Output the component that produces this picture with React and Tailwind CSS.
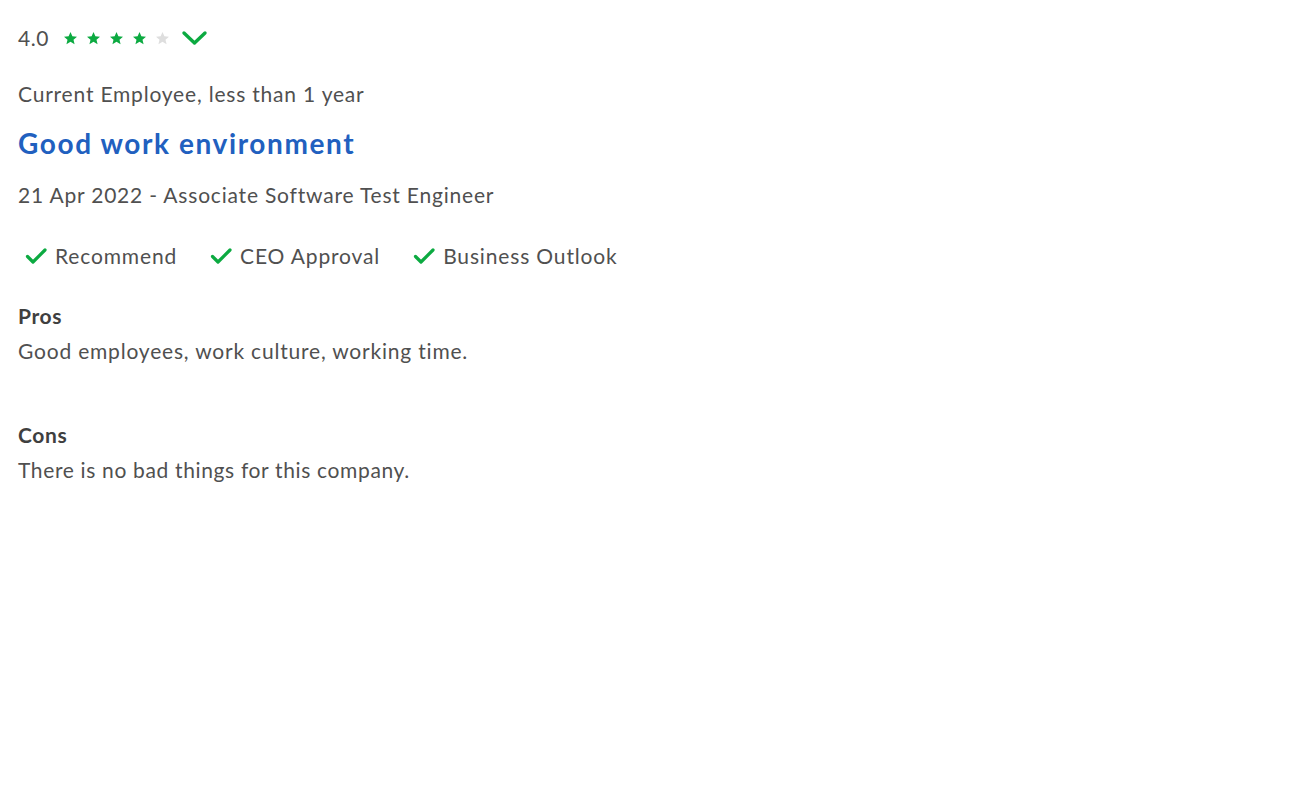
import React from 'react';

const Star = ({ filled }) => (
  <svg width="15" height="15" viewBox="0 0 24 24" fill={filled ? '#0caa41' : '#dedede'}>
    <path d="M12 1.5l3 6.9 7.4.6-5.6 4.9 1.7 7.3L12 17.3l-6.5 3.9 1.7-7.3L1.6 9l7.4-.6z" />
  </svg>
);

const Check = () => (
  <svg width="24" height="24" viewBox="0 0 24 24" fill="none" stroke="#0caa41" strokeWidth="3.2" strokeLinecap="round" strokeLinejoin="round">
    <path d="M3.5 12.5l5.5 5.5L21 6" />
  </svg>
);

const App = () => {
  const checks = ['Recommend', 'CEO Approval', 'Business Outlook'];

  return (
    <div className="min-h-screen bg-white px-[18px] pt-[24px] text-[#505050]" style={{ fontFamily: 'Lato, "Open Sans", sans-serif' }}>
      <div className="flex items-center h-[28px]">
        <span className="text-[21px] tracking-[0.6px] mr-[14px]">4.0</span>
        <div className="flex gap-[8px]">
          {[1, 2, 3, 4, 5].map((i) => (
            <Star key={i} filled={i <= 4} />
          ))}
        </div>
        <svg className="ml-[11px]" width="27" height="20" viewBox="0 0 27 20" fill="none" stroke="#0caa41" strokeWidth="3.4" strokeLinecap="round" strokeLinejoin="round">
          <path d="M3 5l10.5 10L24 5" />
        </svg>
      </div>

      <p className="text-[21px] tracking-[0.8px] leading-[28px] mt-[28px]">Current Employee, less than 1 year</p>
      <h2 className="text-[28px] tracking-[1.6px] leading-[36px] font-bold text-[#2160bf] mt-[17px]">Good work environment</h2>
      <p className="text-[21px] tracking-[0.8px] leading-[28px] mt-[20px]">21 Apr 2022 - Associate Software Test Engineer</p>

      <div className="flex items-center gap-[32px] mt-[33px] pl-[6px]">
        {checks.map((c) => (
          <div key={c} className="flex items-center gap-[7px]">
            <Check />
            <span className="text-[21px] tracking-[0.85px] leading-[28px]">{c}</span>
          </div>
        ))}
      </div>

      <div className="mt-[32px]">
        <p className="text-[21px] tracking-[0.6px] leading-[28px] font-bold text-[#3f3f3f]">Pros</p>
        <p className="text-[21px] tracking-[0.8px] leading-[28px] mt-[7px]">Good employees, work culture, working time.</p>
      </div>

      <div className="mt-[56px]">
        <p className="text-[21px] tracking-[0.6px] leading-[28px] font-bold text-[#3f3f3f]">Cons</p>
        <p className="text-[21px] tracking-[0.65px] leading-[28px] mt-[7px]">There is no bad things for this company.</p>
      </div>
    </div>
  );
};

export default App;
